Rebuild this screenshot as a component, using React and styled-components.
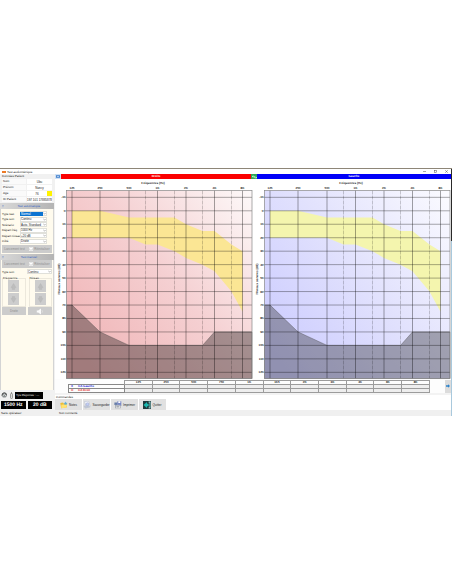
import { useState } from "react";
import styled, { createGlobalStyle } from "styled-components";

const GlobalStyle = createGlobalStyle`
  * {
    box-sizing: border-box;
  }
  body {
    margin: 0;
    background: #ffffff;
    font-family: "Liberation Sans", Arial, sans-serif;
    font-size: 3px;
    line-height: 4px;
    color: #222222;
    text-rendering: geometricPrecision;
  }
  button, select, input {
    font: inherit;
    color: inherit;
    margin: 0;
    padding: 0;
    border: 0;
    border-radius: 0;
    appearance: none;
  }
`;

const Page = styled.div`
  min-height: 100vh;
  display: flex;
  flex-direction: column;
  justify-content: center;
`;

const Window = styled.div`
  border-top: 1px solid #8e8678;
  padding-right: 1px;
  background: linear-gradient(#2a2a2a 29%, #a9c9dd 29%);
`;

const TitleBar = styled.header`
  height: 5px;
  display: flex;
  align-items: center;
  gap: 1px;
  padding-left: 2px;
  background: #ffffff;
`;

const AppMark = styled.span`
  width: 4px;
  height: 2px;
  background: #ed7a25;
`;

const Title = styled.h1`
  flex: 1;
  margin: 0;
  font-size: 3px;
  font-weight: 400;
`;

const WindowButton = styled.button`
  width: 10px;
  height: 4px;
  display: flex;
  justify-content: center;
  align-items: center;
  background: transparent;
`;

const Body = styled.div`
  display: flex;
  background: #ffffff;
`;

const Sidebar = styled.aside`
  width: 55px;
  flex: none;
  display: flex;
  flex-direction: column;
  padding-right: 1px;
  background: #f1f1f1;
`;

const PanelTitle = styled.h2`
  height: 5px;
  margin: 0;
  padding-left: 2px;
  font-size: 3px;
  line-height: 5px;
  font-weight: 400;
`;

const PatientGrid = styled.div`
  display: grid;
  grid-template-columns: 24px 1fr;
  gap: 1px;
  padding: 0 2px 1px;
`;

const PatientLabel = styled.label`
  height: 5px;
  padding-left: 1px;
  line-height: 5px;
  background: #fafafa;
`;

const PatientValue = styled.div`
  display: flex;
  height: 5px;
  background: #ffffff;
`;

const PatientInput = styled.input`
  width: 100%;
  min-width: 0;
  height: 5px;
  text-align: center;
  background: transparent;
`;

const AgeColor = styled.span`
  width: 5px;
  flex: none;
  background: #fff200;
`;

const SectionHead = styled.h2`
  height: 6px;
  margin: 0;
  display: flex;
  align-items: center;
  padding-left: 2px;
  background: linear-gradient(90deg, #d8d8d8, #b4b4b4);
  color: #3766c4;
  font-size: 3px;
  font-weight: 400;
  span {
    flex: 1;
    text-align: center;
  }
`;

const Section = styled.section`
  background: #fffbee;
  border: solid #d4d4d4;
  border-width: 0 1px;
  flex: ${(props) => (props.$grow ? "1" : "none")};
`;

const Settings = styled.div`
  height: 36px;
  padding: 2px 6px 1px 1px;
  display: flex;
  flex-direction: column;
  justify-content: space-between;
`;

const Field = styled.div`
  display: grid;
  grid-template-columns: ${(props) => props.$labelWidth}px 1fr;
  align-items: center;
  white-space: nowrap;
`;

const SelectBox = styled.div`
  display: flex;
  align-items: center;
  height: 5px;
  padding-right: 1px;
  background: #ffffff;
  box-shadow: 0 0 0 1px #e0e0da inset;
  svg {
    flex: none;
  }
`;

const Select = styled.select`
  flex: 1;
  min-width: 0;
  height: ${(props) => (props.$active ? 4 : 5)}px;
  padding-left: 1px;
  line-height: 4px;
  background: ${(props) => (props.$active ? "#0b74d1" : "transparent")};
  color: ${(props) => (props.$active ? "#ffffff" : "#222222")};
`;

const ButtonRow = styled.div`
  display: grid;
  grid-template-columns: 1fr 1fr;
  gap: ${(props) => props.$gap}px;
  height: 9px;
  padding: 0 1px 1px;
`;

const GreyButton = styled.button`
  display: flex;
  align-items: center;
  justify-content: center;
  gap: 1px;
  min-width: 0;
  background: #cccccc;
  color: #8e8e8e;
  white-space: nowrap;
`;

const Manual = styled.div`
  padding: 0 1px 0 1px;
`;

const StepGroups = styled.div`
  display: grid;
  grid-template-columns: 1fr 1fr;
  gap: 3px;
  padding: 2px 1px 0;
`;

const StepGroup = styled.fieldset`
  min-width: 0;
  margin: 0;
  padding: 0;
  border: 1px solid #ece8dc;
  display: flex;
  flex-direction: column;
  align-items: center;
`;

const StepLegend = styled.legend`
  padding: 0;
  height: 4px;
`;

const StepButton = styled.button`
  width: 11px;
  height: 12px;
  margin-bottom: 1px;
  display: flex;
  align-items: center;
  justify-content: center;
  background: #cdcdcd;
`;

const Response = styled.div`
  height: 10px;
  display: flex;
  align-items: center;
  gap: 2px;
  padding-left: 1px;
`;

const ResponseTime = styled.output`
  width: 28px;
  height: 7px;
  line-height: 7px;
  padding-left: 1px;
  background: #000000;
  color: #e8e8e8;
  white-space: nowrap;
`;

const Displays = styled.div`
  display: grid;
  grid-template-columns: 1fr 1fr;
  gap: 2px;
  padding: 1px 2px 1px 1px;
`;

const Display = styled.output`
  height: 8px;
  background: #000000;
  color: #ffffff;
  font-size: 5px;
  font-weight: 700;
  line-height: 8px;
  text-align: center;
`;

const Main = styled.main`
  flex: 1;
  min-width: 0;
  display: flex;
  flex-direction: column;
`;

const EarBars = styled.div`
  display: grid;
  grid-template-columns: 6px 190fr 6px 194fr;
  height: 5px;
`;

const EarBar = styled.div`
  background: ${(props) => props.$color};
  color: #ffffff;
  font-weight: 700;
  line-height: 5px;
  text-align: center;
`;

const EarButton = styled.button`
  display: flex;
  align-items: center;
  justify-content: center;
  background: ${(props) => props.$color};
`;

const Charts = styled.div`
  display: grid;
  grid-template-columns: 1fr 1fr;
`;

const ChartSvg = styled.svg`
  display: block;
  width: 100%;
  height: auto;
  font-size: 3px;
  font-weight: 700;
  fill: #222222;
`;

const Results = styled.div`
  display: flex;
  padding: 1px 0 0 13px;
  background: #fdfdfd;
`;

const TableWrapper = styled.div`
  flex: 1;
  min-width: 0;
  padding-right: 15px;
`;

const ResultTable = styled.table`
  width: 100%;
  table-layout: fixed;
  border-collapse: collapse;
  font-weight: 700;
  line-height: 3px;
`;

const LabelCol = styled.col`
  width: 56px;
`;

const HeadCell = styled.th`
  height: 4px;
  padding: 0;
  border: ${(props) => (props.$empty ? "0" : "1px solid #9c9c9c")};
`;

const EarCell = styled.th`
  height: 4px;
  padding: 0 0 0 2px;
  border: 1px solid #888888;
  color: ${(props) => props.$color};
  text-align: left;
`;

const EarMark = styled.span`
  display: inline-block;
  width: 7px;
`;

const Cell = styled.td`
  padding: 0;
  border: 1px solid #9c9c9c;
  background: #eeeeee;
`;

const NextButton = styled.button`
  width: 6px;
  background: #dcdcdc;
`;

const Commands = styled.section`
  flex: 1;
  border-top: 2px solid #f3f3f3;
  h2 {
    margin: 0;
    padding-left: 1px;
    font-size: 3px;
    line-height: 4px;
    font-weight: 400;
  }
`;

const CommandRow = styled.div`
  display: flex;
  gap: 1px;
`;

const CommandButton = styled.button`
  width: 27px;
  height: 11px;
  display: flex;
  align-items: center;
  justify-content: center;
  gap: 1px;
  background: #e1e1e1;
`;

const StatusBar = styled.footer`
  height: 6px;
  display: flex;
  padding-left: 1px;
  background: #f0f0f0;
  line-height: 6px;
  span:first-child {
    width: 58px;
  }
`;

const FREQS = [
  { name: "125", x: 17, major: true },
  { name: "250", x: 45, major: true },
  { name: "500", x: 74, major: true },
  { name: "750", x: 90.5 },
  { name: "1K", x: 102.5, major: true },
  { name: "1K5", x: 119.5 },
  { name: "2K", x: 131, major: true },
  { name: "3K", x: 147.5 },
  { name: "4K", x: 159.5, major: true },
  { name: "6K", x: 176.5 },
  { name: "8K", x: 187.5, major: true },
];

const LEVELS = [-10, 0, 10, 20, 30, 40, 50, 60, 70, 80, 90, 100, 110, 120];

const NORM = [
  ["125", 0], ["250", 0], ["500", 5], ["1K5", 5], ["2K", 10], ["3K", 15],
  ["4K", 15], ["6K", 25], ["8K", 30], ["8K", 75], ["6K", 60], ["4K", 45],
  ["3K", 40], ["2K", 35], ["1K5", 30], ["1K", 25], ["750", 25], ["500", 20],
  ["125", 20],
];

const LIMIT = [
  ["125", 70], ["250", 90], ["500", 100], ["3K", 100], ["4K", 90],
];

const LEFT = 11.5;
const RIGHT = 197;
const TOP = 11.5;
const BOTTOM = 199.5;

const xOf = (name) => FREQS.find((f) => f.name === name).x;
const yOf = (level) => 31.8 + level * 1.346;
const toPoints = (list) => list.map(([f, l]) => `${xOf(f)},${yOf(l)}`).join(" ");

const Audiogram = ({ id, from, middle, to, band, limit }) => (
  <ChartSvg viewBox="0 0 198 200" role="img" aria-label={`Audiogramme ${id}`}>
    <defs>
      <linearGradient id={id} x1="0" y1="0.8" x2="1" y2="0">
        <stop offset="0" stopColor={from} />
        <stop offset="0.5" stopColor={middle} />
        <stop offset="1" stopColor={to} />
      </linearGradient>
    </defs>
    <rect x={LEFT} y={TOP} width={RIGHT - LEFT} height={BOTTOM - TOP} fill={`url(#${id})`} />
    <polygon points={toPoints(NORM)} fill={band} />
    <polygon
      points={`${LEFT},${BOTTOM} ${LEFT},${yOf(70)} ${toPoints(LIMIT)} ${RIGHT},${yOf(90)} ${RIGHT},${BOTTOM}`}
      fill={limit}
      fillOpacity="0.44"
      stroke="#444"
      strokeWidth="0.4"
    />
    {LEVELS.map((level) => (
      <g key={level}>
        <line x1={LEFT - 1} x2={RIGHT} y1={yOf(level)} y2={yOf(level)} stroke="#000" strokeOpacity="0.42" strokeWidth="0.8" />
        <text x={LEFT - 1} y={yOf(level) + 1} textAnchor="end">{level}</text>
      </g>
    ))}
    {FREQS.map((f) => (
      <g key={f.name}>
        <line
          x1={f.x}
          x2={f.x}
          y1={TOP}
          y2={BOTTOM}
          stroke="#000"
          strokeOpacity={f.major ? 0.4 : 0.28}
          strokeWidth={f.major ? 0.9 : 0.7}
          strokeDasharray={f.major ? undefined : "4 1"}
        />
        {f.major && <text x={f.x} y="10" textAnchor="middle">{f.name}</text>}
      </g>
    ))}
    <rect x={LEFT} y={TOP} width={RIGHT - LEFT} height={BOTTOM - TOP} fill="none" stroke="#888" strokeWidth="0.7" />
    <text x="98" y="4.5" textAnchor="middle">Fréquences (Hz)</text>
    <text transform="translate(4.5 100) rotate(-90)" textAnchor="middle">Niveaux sonores (dB)</text>
  </ChartSvg>
);

const Chevron = () => (
  <svg width="3" height="3" viewBox="0 0 3 3">
    <path d="M0.4 1 L1.5 2.1 L2.6 1" fill="none" stroke="#666" strokeWidth="0.5" />
  </svg>
);

const Arrow = ({ down }) => (
  <svg width="7" height="7" viewBox="0 0 7 7">
    <path
      d={down ? "M2.3 0.5h2.4v2H6L3.5 6.5L1 2.5h1.3z" : "M2.3 6.5h2.4v-2H6L3.5 0.5L1 4.5h1.3z"}
      fill="#bdbdbd"
      stroke="#b0b0b0"
      strokeWidth="0.3"
    />
  </svg>
);

const CrossIcon = () => (
  <svg width="4" height="4" viewBox="0 0 4 4">
    <rect width="4" height="4" fill="#dadada" />
    <path d="M0.5 0.5L3.5 3.5M3.5 0.5L0.5 3.5" stroke="#fff" strokeWidth="1.1" />
  </svg>
);

const SpeakerIcon = () => (
  <svg width="8" height="7" viewBox="0 0 8 7">
    <path d="M0.8 2.5H2.2L5 0.4V6.6L2.2 4.5H0.8z" fill="#fafafa" />
    <path d="M6 2.2Q7 3.5 6 4.8" fill="none" stroke="#e8e8e8" strokeWidth="0.6" />
  </svg>
);

const HeadsetIcon = () => (
  <svg width="7" height="7" viewBox="0 0 7 7">
    <circle cx="3.3" cy="3" r="2.6" fill="#8a8f91" />
    <path d="M1 3.7Q1 0.7 3.4 0.8Q5.6 1 5.5 3.3" fill="none" stroke="#444" strokeWidth="0.8" />
    <path d="M1.4 4.2L3.5 2.3L5.3 4.4" stroke="#d7dada" fill="none" />
  </svg>
);

const HandleIcon = () => (
  <svg width="3" height="7" viewBox="0 0 3 7">
    <rect x="0.5" y="1.5" width="2" height="5" rx="0.8" fill="#ddd" stroke="#666" strokeWidth="0.6" />
    <path d="M1.5 1.5V0" stroke="#666" strokeWidth="0.6" />
  </svg>
);

const NotesIcon = () => (
  <svg width="8" height="8" viewBox="0 0 8 8">
    <path d="M0.3 2L3 1.5L3.8 2.4L6.8 2L7 6.2L1.2 7.3z" fill="#edbd35" />
    <path d="M1.3 3.8L7.3 3L6.5 6.5L1.2 7.3z" fill="#ffe273" />
    <path d="M5.5 0.5L6.2 1.7L7.6 1.9L6.5 2.8L6.7 4.1L5.5 3.4L4.4 4L4.6 2.8L3.7 1.9L5 1.7z" fill="#5badda" />
  </svg>
);

const SaveIcon = () => (
  <svg width="8" height="8" viewBox="0 0 8 8">
    <path d="M1.6 0.5L5.6 0.2L7.3 5.4L3.3 6.8z" fill="#f7f9ff" stroke="#b1b8cd" strokeWidth="0.5" />
    <path d="M0.5 4.8L6.4 4.2L7.4 6.2L2 7.6z" fill="#bec5d4" />
    <circle cx="4.4" cy="3.2" r="1.5" fill="#c3cdf3" stroke="#8c98c0" strokeWidth="0.4" />
  </svg>
);

const PrintIcon = () => (
  <svg width="8" height="8" viewBox="0 0 8 8">
    <path d="M0.4 1.5H3.6V4H0.4z" fill="#657ca8" />
    <path d="M3.3 0.3H7.3V5H3.3z" fill="#7888c6" />
    <path d="M4.3 0.3H6.3V2H4.3z" fill="#fff" />
    <path d="M1 3.8H6.7V7.3H1z" fill="#a6acb6" />
    <path d="M1.9 4.8H5.8V6.9H1.9z" fill="#f4f4f4" />
    <path d="M2.4 5.5H5.2M2.4 6.2H4.8" stroke="#59616b" strokeWidth="0.4" />
  </svg>
);

const ExitIcon = () => (
  <svg width="8" height="8" viewBox="0 0 8 8">
    <rect width="8" height="8" fill="#203a3d" />
    <path d="M0.5 4L4 1V2.7H5.6V5.3H4V7z" fill="#19b7ae" />
    <path d="M5.6 0.6H7.5V7.4H5.6V6.3H6.5V1.7H5.6z" fill="#8bcac9" />
  </svg>
);

const PATIENT = [
  { id: "nom", label: "Nom", value: "Ubu" },
  { id: "prenom", label: "Prénom", value: "Nancy" },
  { id: "age", label: "Age", value: "76", color: true },
  { id: "patient", label: "ID Patient", value: "197 101 17885878" },
];

const SETTINGS = [
  { id: "type-test", label: "Type test", value: "Normal", active: true },
  { id: "type-son", label: "Type son", value: "Continu" },
  { id: "scenario", label: "Scénario", value: "Auto. Standard" },
  { id: "freq", label: "Départ fréq.", value: "1000 Hz" },
  { id: "niveau", label: "Départ niveau", value: "+20 dB" },
  { id: "cote", label: "Côté", value: "Droite" },
];

const COMMANDS = [
  { label: "Notes", Icon: NotesIcon },
  { label: "Sauvegarder", Icon: SaveIcon },
  { label: "Imprimer", Icon: PrintIcon },
  { label: "Quitter", Icon: ExitIcon },
];

const EARS = [
  { label: "CA Gauche", mark: "X", color: "#2424d8" },
  { label: "CA Droit", mark: "O", color: "#dd2222" },
];

const LabelledSelect = ({ id, label, value, active, labelWidth }) => (
  <Field $labelWidth={labelWidth}>
    <label htmlFor={id}>{label}</label>
    <SelectBox>
      <Select id={id} $active={active} defaultValue={value}>
        <option>{value}</option>
      </Select>
      <Chevron />
    </SelectBox>
  </Field>
);

const TestButtons = () => (
  <ButtonRow $gap={0}>
    <GreyButton disabled>Lancement test</GreyButton>
    <GreyButton disabled>
      <CrossIcon />
      Réinitialiser
    </GreyButton>
  </ButtonRow>
);

const App = () => {
  const [patient, setPatient] = useState(PATIENT);

  const handleChange = (id, value) => {
    setPatient(patient.map((p) => (p.id === id ? { ...p, value } : p)));
  };

  return (
    <Page>
      <GlobalStyle />
      <Window>
        <TitleBar>
          <AppMark />
          <Title>Test audiométrique</Title>
          <WindowButton aria-label="Réduire">
            <svg width="3" height="3" viewBox="0 0 3 3"><path d="M0 1.5H3" stroke="#555" strokeWidth="0.5" /></svg>
          </WindowButton>
          <WindowButton aria-label="Agrandir">
            <svg width="3" height="3" viewBox="0 0 3 3"><rect x="0.3" y="0.3" width="2.4" height="2.4" fill="none" stroke="#555" strokeWidth="0.5" /></svg>
          </WindowButton>
          <WindowButton aria-label="Fermer">
            <svg width="3" height="3" viewBox="0 0 3 3"><path d="M0.2 0.2L2.8 2.8M2.8 0.2L0.2 2.8" stroke="#555" strokeWidth="0.5" /></svg>
          </WindowButton>
        </TitleBar>
        <Body>
          <Sidebar>
            <PanelTitle>Données Patient</PanelTitle>
            <PatientGrid>
              {patient.map((p) => [
                <PatientLabel key={`${p.id}-label`} htmlFor={p.id}>{p.label}</PatientLabel>,
                <PatientValue key={p.id}>
                  <PatientInput id={p.id} value={p.value} onChange={(e) => handleChange(p.id, e.target.value)} />
                  {p.color && <AgeColor />}
                </PatientValue>,
              ])}
            </PatientGrid>
            <SectionHead>▯<span>Test automatique</span></SectionHead>
            <Section>
              <Settings>
                {SETTINGS.map((s) => (
                  <LabelledSelect key={s.id} labelWidth={18} {...s} />
                ))}
              </Settings>
              <TestButtons />
            </Section>
            <SectionHead>▯<span>Test manuel</span></SectionHead>
            <Section $grow>
              <TestButtons />
              <Manual>
                <LabelledSelect id="type-son-manuel" label="Type son" value="Continu" labelWidth={25} />
              </Manual>
              <StepGroups>
                {["Fréquence", "Niveau"].map((name) => (
                  <StepGroup key={name}>
                    <StepLegend>{name}</StepLegend>
                    <StepButton disabled aria-label={`${name} +`}><Arrow /></StepButton>
                    <StepButton disabled aria-label={`${name} -`}><Arrow down /></StepButton>
                  </StepGroup>
                ))}
              </StepGroups>
              <ButtonRow $gap={2}>
                <GreyButton disabled>Droite</GreyButton>
                <GreyButton disabled aria-label="Son"><SpeakerIcon /></GreyButton>
              </ButtonRow>
            </Section>
            <Response>
              <HeadsetIcon />
              <HandleIcon />
              <ResponseTime>Tps Réponse : ---</ResponseTime>
            </Response>
            <Displays>
              <Display>1500 Hz</Display>
              <Display>20 dB</Display>
            </Displays>
          </Sidebar>
          <Main>
            <EarBars>
              <EarButton $color="#cfe0f5" aria-label="Oreille droite">
                <svg width="4" height="3" viewBox="0 0 4 3"><path d="M0 0.3H4V2.7H0z" fill="#3478c8" /><path d="M0.8 1.5H3.2" stroke="#fff" strokeWidth="0.6" /></svg>
              </EarButton>
              <EarBar $color="#fb0000">Droite</EarBar>
              <EarButton $color="#2da657" aria-label="Deux oreilles">
                <svg width="5" height="4" viewBox="0 0 5 4"><path d="M0 1.5H3M1.5 0.3L0.2 1.5L1.5 2.7M5 2.6H2M3.6 1.5L4.8 2.6L3.6 3.7" fill="none" stroke="#d9ffdf" strokeWidth="0.6" /></svg>
              </EarButton>
              <EarBar $color="#0000f8">Gauche</EarBar>
            </EarBars>
            <Charts>
              <Audiogram id="droite" from="#f0b4b6" middle="#f5d0d2" to="#fdf9f9" band="#fbe694" limit="#3c3232" />
              <Audiogram id="gauche" from="#ccccff" middle="#e2e2fd" to="#fbfbff" band="#f4f5ae" limit="#46464e" />
            </Charts>
            <Results>
              <TableWrapper>
                <ResultTable>
                  <colgroup>
                    <LabelCol />
                    {FREQS.map((f) => <col key={f.name} />)}
                  </colgroup>
                  <thead>
                    <tr>
                      <HeadCell $empty />
                      {FREQS.map((f) => <HeadCell key={f.name}>{f.name}</HeadCell>)}
                    </tr>
                  </thead>
                  <tbody>
                    {EARS.map((ear) => (
                      <tr key={ear.label}>
                        <EarCell $color={ear.color}>
                          <EarMark>{ear.mark}</EarMark>
                          {ear.label}
                        </EarCell>
                        {FREQS.map((f) => <Cell key={f.name} />)}
                      </tr>
                    ))}
                  </tbody>
                </ResultTable>
              </TableWrapper>
              <NextButton aria-label="Suivant">
                <svg width="4" height="4" viewBox="0 0 4 4"><path d="M0 1.2H2V0.2L4 2L2 3.8V2.8H0z" fill="#2c82c9" /></svg>
              </NextButton>
            </Results>
            <Commands>
              <h2>Commandes</h2>
              <CommandRow>
                {COMMANDS.map(({ label, Icon }) => (
                  <CommandButton key={label}>
                    <Icon />
                    {label}
                  </CommandButton>
                ))}
              </CommandRow>
            </Commands>
          </Main>
        </Body>
        <StatusBar>
          <span>Sans opérateur</span>
          <span>Non connecté</span>
        </StatusBar>
      </Window>
    </Page>
  );
};

export default App;
